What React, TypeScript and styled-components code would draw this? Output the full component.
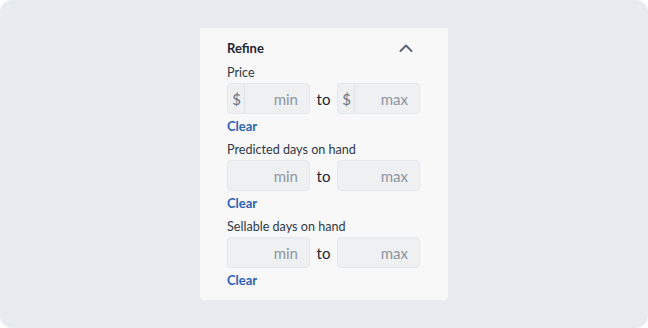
import React from "react";
import styled, { createGlobalStyle } from "styled-components";

const Global = createGlobalStyle`
  html, body { margin: 0; padding: 0; background: #ffffff; }
  body { font-family: "Lato", "Noto Sans", sans-serif; }
  * { box-sizing: border-box; }
`;

const Page = styled.div`
  width: 648px;
  height: 328px;
  background: #e8ecf1;
  border-radius: 12px;
  display: flex;
  justify-content: center;
  padding-top: 28px;
`;

const Card = styled.div`
  width: 248px;
  height: 272px;
  background: #f8f8f9;
  border-radius: 0 0 4px 4px;
  padding: 11px 27px 0 27px;
  display: flex;
  flex-direction: column;
`;

const Header = styled.div`
  display: flex;
  align-items: center;
  justify-content: space-between;
  height: 18px;
  margin-bottom: 8px;
`;

const Title = styled.div`
  font-size: 13px;
  font-weight: 700;
  color: #1d2533;
`;

const Section = styled.div`
  display: flex;
  flex-direction: column;
  margin-bottom: 8px;
`;

const Label = styled.div`
  font-size: 12.6px;
  color: #2f3846;
  line-height: 16px;
  height: 16px;
  margin-bottom: 2px;
`;

const Row = styled.div`
  display: flex;
  align-items: center;
`;

const Field = styled.div`
  width: 83px;
  height: 31px;
  background: #eef0f2;
  border: 1px solid #e4e7eb;
  border-radius: 4px;
  display: flex;
  align-items: center;
`;

const Prefix = styled.div`
  width: 17px;
  height: 100%;
  border-right: 1px solid #dfe2e6;
  display: flex;
  align-items: center;
  justify-content: center;
  font-size: 15px;
  color: #6b7482;
  padding-left: 1px;
`;

const Placeholder = styled.div`
  flex: 1;
  text-align: right;
  padding-right: 11px;
  font-size: 15px;
  color: #8d95a1;
`;

const To = styled.div`
  width: 27px;
  text-align: center;
  font-size: 15px;
  color: #1d2533;
`;

const Clear = styled.a`
  font-size: 13px;
  font-weight: 700;
  color: #2d62b4;
  margin-top: 4px;
  line-height: 16px;
  cursor: pointer;
`;

const Chevron = () => (
  <svg width="16" height="10" viewBox="0 0 16 10" style={{ marginRight: 7 }}>
    <path d="M2.5 8 L8 2.5 L13.5 8" fill="none" stroke="#5b6675" strokeWidth="2" strokeLinecap="round" strokeLinejoin="round" />
  </svg>
);

const Range = ({ dollar }: { dollar?: boolean }) => (
  <Row>
    <Field>
      {dollar && <Prefix>$</Prefix>}
      <Placeholder>min</Placeholder>
    </Field>
    <To>to</To>
    <Field>
      {dollar && <Prefix>$</Prefix>}
      <Placeholder>max</Placeholder>
    </Field>
  </Row>
);

export default function App() {
  const sections = [
    { label: "Price", dollar: true },
    { label: "Predicted days on hand", dollar: false },
    { label: "Sellable days on hand", dollar: false },
  ];
  return (
    <>
      <Global />
      <Page>
        <Card>
          <Header>
            <Title>Refine</Title>
            <Chevron />
          </Header>
          {sections.map((s) => (
            <Section key={s.label}>
              <Label>{s.label}</Label>
              <Range dollar={s.dollar} />
              <Clear>Clear</Clear>
            </Section>
          ))}
        </Card>
      </Page>
    </>
  );
}
